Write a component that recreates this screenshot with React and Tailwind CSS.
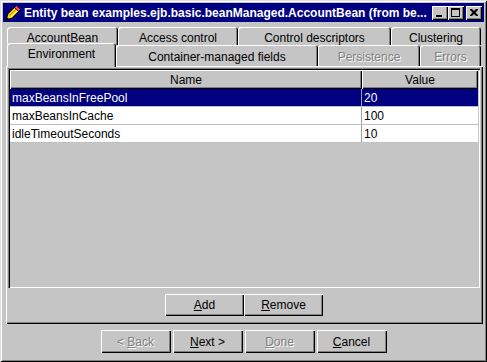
import React from "react";

const raised =
  "shadow-[inset_1px_1px_0_#fff,inset_-1px_-1px_0_#000,inset_-2px_-2px_0_#808080]";
const dis = "text-[#808080] [text-shadow:1px_1px_0_#fff]";

function Tab({ w, children, selected, disabled, row2 }) {
  const base =
    "shrink-0 flex justify-center rounded-t-[3px] bg-[#c5c5c5] whitespace-nowrap leading-[14px] shadow-[inset_1px_1px_0_#fff,inset_-1px_0_0_#000,inset_-2px_0_0_#808080]";
  let cls = base;
  if (row2) {
    cls += selected ? " h-[24px] pt-[4px] relative z-10" : " mt-[2px] h-[21px] pt-[5px]";
  } else {
    cls += " h-[18px] pt-[4px]";
  }
  return (
    <div className={cls} style={{ width: w }}>
      <span className={disabled ? dis : ""}>{children}</span>
    </div>
  );
}

function Btn({ w, children, disabled }) {
  return (
    <div
      className={
        "flex items-center justify-center leading-[14px] bg-[#c5c5c5] " +
        raised +
        (disabled ? " " + dis : "")
      }
      style={{ width: w }}
    >
      {children}
    </div>
  );
}

function TitleIcon() {
  return (
    <svg width="16" height="16" viewBox="0 0 16 16" className="shrink-0">
      <path
        d="M1 15 L2.9 8.9 L9.4 2.4 L13.6 6.6 L7.1 13.1 Z"
        fill="#ffd800"
        stroke="#000"
        strokeWidth="1"
        strokeLinejoin="round"
      />
      <path d="M4.6 10.6 L11 4.2" stroke="#a07000" strokeWidth="1" />
      <path d="M6 12 L12.3 5.6" stroke="#fff6a0" strokeWidth="1" />
      <path
        d="M9.4 2.4 L11.5 0.5 L15.5 4.5 L13.6 6.6 Z"
        fill="#ff4070"
        stroke="#000"
        strokeWidth="1"
        strokeLinejoin="round"
      />
      <path d="M1 15 L1.9 12 L4 14.1 Z" fill="#000" />
    </svg>
  );
}

function TBtn({ children, className = "" }) {
  return (
    <div
      className={
        "w-[16px] h-[14px] bg-[#c5c5c5] flex items-center justify-center shadow-[inset_1px_1px_0_#fff,inset_-1px_-1px_0_#000,inset_-2px_-2px_0_#808080] " +
        className
      }
    >
      {children}
    </div>
  );
}

export default function App() {
  const rows = [
    ["maxBeansInFreePool", "20", true],
    ["maxBeansInCache", "100", false],
    ["idleTimeoutSeconds", "10", false],
  ];
  return (
    <div className="w-[487px] h-[362px] bg-[#c5c5c5] p-[3px] flex flex-col font-['Liberation_Sans',Arial,sans-serif] text-[12px] text-black overflow-hidden shadow-[inset_1px_1px_0_#dfdfdf,inset_-1px_-1px_0_#000,inset_2px_2px_0_#fff,inset_-2px_-2px_0_#808080]">
      {/* Title bar */}
      <div className="h-[19px] shrink-0 bg-[#000080] flex items-center pl-[2px] pr-[2px]">
        <TitleIcon />
        <span className="ml-[3px] text-white font-bold leading-[14px] whitespace-nowrap overflow-hidden">
          Entity bean examples.ejb.basic.beanManaged.AccountBean (from be...
        </span>
        <div className="ml-auto flex items-center">
          <TBtn>
            <div className="w-[6px] h-[2px] bg-black mt-[6px] -ml-[2px]" />
          </TBtn>
          <TBtn>
            <div className="w-[9px] h-[9px] border border-black border-t-2 -mt-[1px] -ml-[1px]" />
          </TBtn>
          <TBtn className="ml-[2px]">
            <svg width="8" height="7" viewBox="0 0 8 7" className="-ml-[1px] -mt-[1px]">
              <path d="M0 0h2l2 2 2-2h2v1l-2.5 2.5L8 6v1H6L4 5 2 7H0V6l2.5-2.5L0 1z" fill="#000" />
            </svg>
          </TBtn>
        </div>
      </div>

      {/* Tabs */}
      <div className="mt-[5px] pl-[4px] pr-[3px] shrink-0">
        <div className="flex h-[18px]">
          <Tab w={111}>AccountBean</Tab>
          <Tab w={120}>Access control</Tab>
          <Tab w={153}>Control descriptors</Tab>
          <Tab w={90}>Clustering</Tab>
        </div>
        <div className="flex h-[23px] -mt-[2px] items-start relative z-10">
          <Tab w={109} row2 selected>Environment</Tab>
          <Tab w={202} row2>Container-managed fields</Tab>
          <Tab w={102} row2 disabled>Persistence</Tab>
          <Tab w={61} row2 disabled>Errors</Tab>
        </div>
      </div>

      {/* Panel */}
      <div className="ml-[3px] mr-[1px] h-[258px] shrink-0 flex flex-col pl-[2px] pr-[3px] pt-[2px] shadow-[inset_1px_1px_0_#fff,inset_-1px_-1px_0_#000,inset_-2px_-2px_0_#808080]">
        <div className="h-[220px] p-[2px] shadow-[inset_1px_1px_0_#808080,inset_2px_2px_0_#000,inset_-1px_-1px_0_#fff]">
          {/* header */}
          <div className="flex h-[19px]">
            <div className={"w-[352px] flex items-center justify-center leading-[14px] " + raised}>Name</div>
            <div className={"flex-1 flex items-center justify-center leading-[14px] " + raised}>Value</div>
          </div>
          {rows.map(([n, v, sel]) => (
            <div
              key={n}
              className={
                "flex h-[18px] border-b border-[#c0c0c0] " +
                (sel ? "bg-[#000080] text-white" : "bg-white")
              }
            >
              <div className="w-[352px] pl-[2px] pt-[2px] leading-[14px] border-r border-[#a0a0a0]">{n}</div>
              <div className="flex-1 pl-[2px] pt-[2px] leading-[14px]">{v}</div>
            </div>
          ))}
        </div>
        <div className="flex-1 flex items-center justify-center pb-[2px]">
          <div className="flex h-[22px]">
            <Btn w={79}>
              <span><u>A</u>dd</span>
            </Btn>
            <Btn w={79}>
              <span><u>R</u>emove</span>
            </Btn>
          </div>
        </div>
      </div>

      {/* Bottom buttons */}
      <div className="flex-1 flex items-center justify-center">
        <div className="flex h-[23px] gap-[2px]">
          <Btn w={70} disabled>
            <span>&lt; <u>B</u>ack</span>
          </Btn>
          <Btn w={70}>
            <span><u>N</u>ext &gt;</span>
          </Btn>
          <Btn w={70} disabled>
            <span><u>D</u>one</span>
          </Btn>
          <Btn w={70}>
            <span><u>C</u>ancel</span>
          </Btn>
        </div>
      </div>
    </div>
  );
}
